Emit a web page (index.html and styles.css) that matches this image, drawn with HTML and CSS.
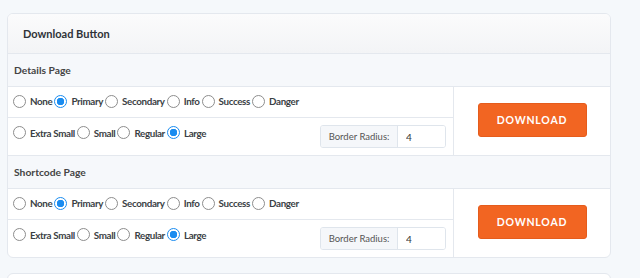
FILE: index.html
```html
<!DOCTYPE html>
<html lang="en">
<head>
    <meta charset="UTF-8">
    <meta name="viewport" content="width=device-width, initial-scale=1.0">
    <title>Download Button Settings</title>
    <link rel="stylesheet" href="styles.css">
</head>
<body>

<div class="card">
    <div class="card-header">Download Button</div>

    <div class="section-title">Details Page</div>
    <div class="section-body">
        <div class="options">
            <div class="option-row">
                <label class="radio"><input type="radio" name="d_style"> None</label>
                <label class="radio"><input type="radio" name="d_style" checked> Primary</label>
                <label class="radio"><input type="radio" name="d_style"> Secondary</label>
                <label class="radio"><input type="radio" name="d_style"> Info</label>
                <label class="radio"><input type="radio" name="d_style"> Success</label>
                <label class="radio"><input type="radio" name="d_style"> Danger</label>
            </div>
            <div class="option-row size-row">
                <div class="sizes">
                    <label class="radio"><input type="radio" name="d_size"> Extra Small</label>
                    <label class="radio"><input type="radio" name="d_size"> Small</label>
                    <label class="radio"><input type="radio" name="d_size"> Regular</label>
                    <label class="radio"><input type="radio" name="d_size" checked> Large</label>
                </div>
                <div class="input-group">
                    <span class="input-label">Border Radius:</span>
                    <input type="text" class="input-value" value="4">
                </div>
            </div>
        </div>
        <div class="preview">
            <button class="download-btn">Download</button>
        </div>
    </div>

    <div class="section-title">Shortcode Page</div>
    <div class="section-body">
        <div class="options">
            <div class="option-row">
                <label class="radio"><input type="radio" name="s_style"> None</label>
                <label class="radio"><input type="radio" name="s_style" checked> Primary</label>
                <label class="radio"><input type="radio" name="s_style"> Secondary</label>
                <label class="radio"><input type="radio" name="s_style"> Info</label>
                <label class="radio"><input type="radio" name="s_style"> Success</label>
                <label class="radio"><input type="radio" name="s_style"> Danger</label>
            </div>
            <div class="option-row size-row">
                <div class="sizes">
                    <label class="radio"><input type="radio" name="s_size"> Extra Small</label>
                    <label class="radio"><input type="radio" name="s_size"> Small</label>
                    <label class="radio"><input type="radio" name="s_size"> Regular</label>
                    <label class="radio"><input type="radio" name="s_size" checked> Large</label>
                </div>
                <div class="input-group">
                    <span class="input-label">Border Radius:</span>
                    <input type="text" class="input-value" value="4">
                </div>
            </div>
        </div>
        <div class="preview">
            <button class="download-btn">Download</button>
        </div>
    </div>
</div>

<div class="card next-card"></div>

</body>
</html>
```

FILE: styles.css
```css
body {
    font-family: 'Lato', sans-serif;
    background: #f5f8fb;
    margin: 0;
    padding: 13px 0 0 7px;
    color: #333;
}

.card {
    width: 602px;
    background: #ffffff;
    border: 1px solid #e4e8ee;
    border-radius: 6px;
    overflow: hidden;
}
.next-card {
    margin-top: 15px;
    height: 40px;
}

.card-header {
    height: 39px;
    line-height: 40px;
    padding-left: 15px;
    background: linear-gradient(#fbfbfc, #f3f4f6);
    border-bottom: 1px solid #e4e8ee;
    font-size: 11px;
    font-weight: 700;
    color: #2f3237;
}

.section-title {
    height: 32px;
    line-height: 33px;
    padding-left: 6px;
    background: #f6f8fb;
    border-bottom: 1px solid #e4e8ee;
    font-size: 10.3px;
    font-weight: 700;
    color: #444;
}

.section-body {
    display: flex;
    border-bottom: 1px solid #e4e8ee;
}
.section-body:last-child {
    border-bottom: none;
}

.options {
    width: 445px;
    border-right: 1px solid #e4e8ee;
}

.option-row {
    display: flex;
    align-items: center;
    height: 28px;
    padding: 0 0 2px 5px;
    border-bottom: 1px solid #e4e8ee;
}
.size-row {
    height: 37px;
    border-bottom: none;
    padding: 0 7px 0 5px;
    align-items: flex-start;
    justify-content: space-between;
}
.sizes {
    display: flex;
    margin-top: 8px;
}

.radio {
    display: inline-flex;
    align-items: center;
    margin-right: 2px;
    font-size: 9.8px;
    font-weight: 700;
    letter-spacing: -0.35px;
    color: #3b3f45;
    cursor: pointer;
}
.radio input {
    appearance: none;
    -webkit-appearance: none;
    width: 13px;
    height: 13px;
    margin: 0 4px 0 0;
    border: 1px solid #8d8d8d;
    border-radius: 50%;
    background: #fff;
    box-sizing: border-box;
}
.radio input:checked {
    border-color: #1a8cf0;
    background: radial-gradient(circle, #1a8cf0 0 3.5px, #fff 4px);
}

.input-group {
    display: flex;
    margin-top: 7px;
    height: 23px;
    border: 1px solid #dfe5ec;
    border-radius: 3px;
    box-sizing: border-box;
    overflow: hidden;
}
.input-label {
    width: 76px;
    line-height: 21px;
    text-align: center;
    background: #f5f7fa;
    border-right: 1px solid #dfe5ec;
    font-size: 9.5px;
    color: #555;
}
.input-value {
    width: 47px;
    box-sizing: border-box;
    border: none;
    padding: 0 0 0 8px;
    font-family: 'Lato', sans-serif;
    font-size: 10px;
    color: #333;
}

.preview {
    flex: 1;
    display: flex;
    align-items: center;
    justify-content: center;
}

.download-btn {
    width: 109px;
    height: 34px;
    background-color: #f26522;
    border: 1px solid #e55c1c;
    border-radius: 3px;
    color: white;
    font-family: 'Lato', sans-serif;
    font-size: 10.5px;
    font-weight: 700;
    letter-spacing: 0.8px;
    text-transform: uppercase;
    margin-top: -2px;
    cursor: pointer;
}
```
